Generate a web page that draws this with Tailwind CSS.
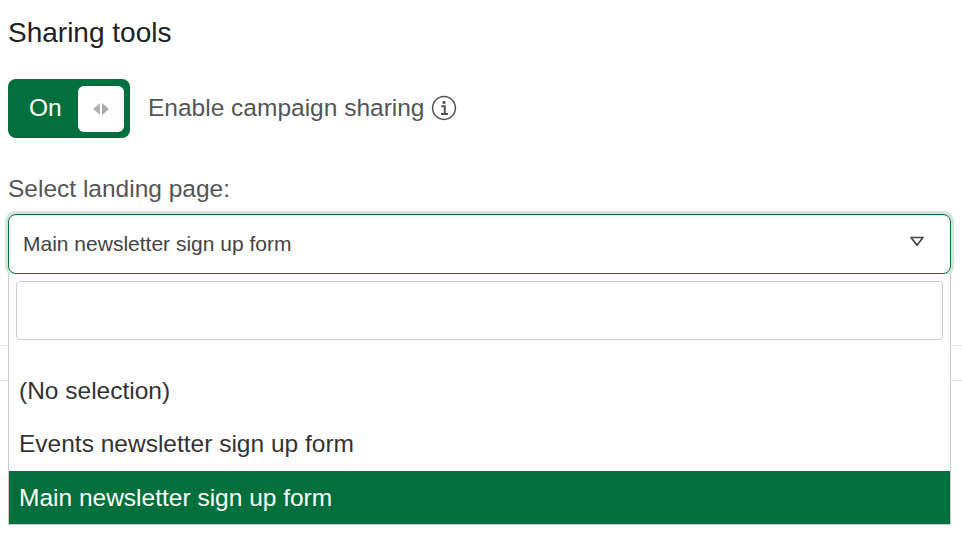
<!DOCTYPE html>
<html lang="en">
<head>
  <meta charset="UTF-8" />
  <title>Sharing tools</title>
  <script src="https://cdn.jsdelivr.net/npm/@tailwindcss/browser@4"></script>
</head>
<body class="bg-white text-[#212121] font-['Liberation_Sans',Arial,sans-serif] h-[536px] overflow-hidden">
  <div class="px-2 pt-[16px]">
    <h2 class="text-[28px] leading-[33px] font-normal">Sharing tools</h2>

    <div class="flex items-center mt-[30px]">
      <div class="w-[122px] h-[59px] bg-[#02703c] rounded-[8px] flex items-center pl-[21px] pr-[6px] justify-between">
        <span class="text-white text-[24.5px] leading-none">On</span>
        <span class="w-[46px] h-[46px] bg-white rounded-[6px] flex items-center justify-center">
          <svg width="20" height="14" viewBox="0 0 20 14">
            <path d="M9 1V13L2 7Z" fill="#b3b3b3" />
            <path d="M11 1V13L18 7Z" fill="#a9a9a9" />
          </svg>
        </span>
      </div>
      <span class="ml-[18px] text-[24.5px] leading-none text-[#555555]">Enable campaign sharing</span>
      <svg class="ml-[6px] -translate-y-px" width="26" height="26" viewBox="0 0 26 26" fill="none" stroke="#555555">
        <circle cx="13" cy="13" r="11.4" stroke-width="1.5" />
        <circle cx="13" cy="7.4" r="1.6" fill="#555555" stroke="none" />
        <path d="M10.2 11.2H13.8V18.6M10 18.9H17" stroke-width="2" />
      </svg>
    </div>

    <label class="block mt-[37px] text-[24.5px] leading-[28px] text-[#555555]">Select landing page:</label>

    <div class="relative mt-[11px] w-[943px]">
      <div class="h-[60px] border border-[#02703c] rounded-[8px] bg-white shadow-[0_0_0_3px_#d3e6dc] flex items-center justify-between pl-[14px] pr-[25px]">
        <span class="text-[21px] text-[#444444]">Main newsletter sign up form</span>
        <svg class="-translate-y-[3px]" width="16" height="11" viewBox="0 0 16 11" fill="none">
          <path d="M2 1.5H14L8 9.2Z" stroke="#444444" stroke-width="1.7" stroke-linejoin="round" />
        </svg>
      </div>

      <div class="absolute left-0 top-[60px] w-full h-[251px] bg-white border border-t-0 border-[#cccccc] z-10">
        <div class="px-[7px] pt-[7px]">
          <div class="h-[59px] border border-[#cccccc] rounded-[4px] bg-white"></div>
        </div>
        <ul class="mt-[24px] text-[24.5px] text-[#333333]">
          <li class="h-[53px] flex items-center px-[10px] pt-[2px]">(No selection)</li>
          <li class="h-[54px] flex items-center px-[10px]">Events newsletter sign up form</li>
          <li class="h-[53px] flex items-center px-[10px] pt-[2px] bg-[#02703c] text-white">Main newsletter sign up form</li>
        </ul>
      </div>
    </div>
  </div>

  <div class="mt-[71px] h-[36px] border-y border-[#e5e5e5]"></div>
</body>
</html>
